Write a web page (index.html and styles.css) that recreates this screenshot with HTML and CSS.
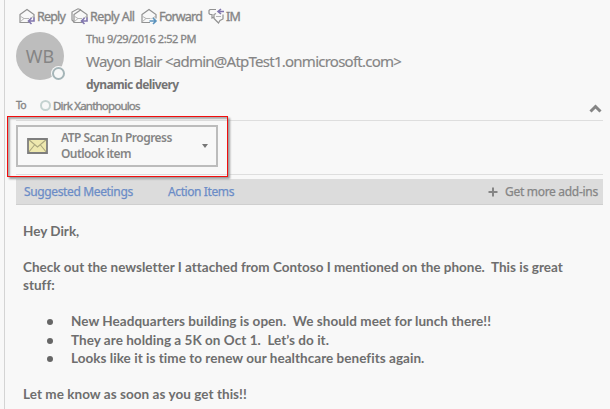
FILE: index.html
```html
<!DOCTYPE html>
<html lang="en">
<head>
<meta charset="utf-8">
<title>dynamic delivery</title>
<link rel="stylesheet" href="styles.css">
</head>
<body>
<main class="pane">
  <nav class="actions">
    <a class="action reply"><svg width="17" height="17" viewBox="0 0 17 17"><path class="env" d="M1 6.500 8 1.500l7 5v8H1z"/><path class="env faint" d="M1 8l4 2.500h6L15 8M1 14l4-3.500"/><path class="halo" d="M16 12.500H10"/><path class="arrow" d="M15 9.500v3.500H9.500m3-3-3 3 3 3"/></svg><span>Reply</span></a>
    <a class="action reply-all"><svg width="18" height="17" viewBox="0 0 18 17"><path class="env" d="M3 14 1 12V4L7 .8l3 1"/><path class="env" d="M3 6.500l6.500-4.500L16 6.500v8H3z"/><path class="env faint" d="M3 8l4 2.500h5L16 8M3 14l4-3.500"/><path class="halo" d="M17 12.500h-6"/><path class="arrow" d="M16 9.500v3.500h-5.500m3-3-3 3 3 3"/></svg><span>Reply All</span></a>
    <a class="action forward"><svg width="17" height="17" viewBox="0 0 17 17"><path class="env" d="M1 6.500 8 1.500l7 5v8H1z"/><path class="env faint" d="M1 8l4 2.500h6L15 8M1 14l4-3.500"/><path class="halo" d="M9 13h7"/><path class="arrow blue" d="M8.500 13H15m-3-3 3 3-3 3"/></svg><span>Forward</span></a>
    <a class="action im"><svg width="17" height="17" viewBox="0 0 17 17"><path class="env" d="M8 1.500H2L1 2.500v3l1 1h2v3.500l2-1"/><path class="env" d="M8 5.500 6 6.500v4l2 2 2.500 2.500 1.500-2.500 3-1.500V6.500"/><path class="env faint" d="M8 8.500h5"/><path class="arrow" d="M16 3.500h-6m3-2.500-3 2.500 3 2.500"/></svg><span>IM</span></a>
  </nav>

  <header class="sender">
    <div class="avatar">WB<i class="presence"></i></div>
    <div class="meta">
      <div class="date">Thu 9/29/2016 2:52 PM</div>
      <div class="from">Wayon Blair &lt;admin@AtpTest1.onmicrosoft.com&gt;</div>
      <div class="subject">dynamic delivery</div>
    </div>
  </header>

  <div class="recipients">
    <span class="to">To</span><i class="dot"></i><span class="name">Dirk Xanthopoulos</span>
    <svg class="chevron" width="13" height="9" viewBox="0 0 13 9"><path d="M1.500 7.500l5-5 5 5"/></svg>
  </div>

  <section class="attachments">
    <div class="card">
      <svg class="mail" width="21" height="16" viewBox="0 0 21 16"><path class="paper" d="M1 1h19v14H1z"/><path class="fold" d="M1 1l9.500 8L20 1M1 15l6.500-8M20 15l-6.500-8"/><path class="edge" d="M1 1h19v14H1z"/></svg>
      <div class="label"><div class="title">ATP Scan In Progress</div><div class="kind">Outlook item</div></div>
      <i class="caret"></i>
    </div>
    <div class="highlight"></div>
  </section>

  <div class="addins">
    <span class="suggested">Suggested Meetings</span>
    <span class="items">Action Items</span>
    <span class="more"><svg width="10" height="10" viewBox="0 0 10 10"><path d="M5 .5v9M.5 5h9"/></svg><span class="more-text">Get more add-ins</span></span>
  </div>

  <article class="message">
    <p>Hey Dirk,</p>
    <p class="gap">Check out the newsletter I attached from Contoso I mentioned on the phone.&nbsp; This is great<br>stuff:</p>
    <ul>
      <li>New Headquarters building is open.&nbsp; We should meet for lunch there!!</li>
      <li>They are holding a 5K on Oct 1.&nbsp; Let’s do it.</li>
      <li>Looks like it is time to renew our healthcare benefits again.</li>
    </ul>
    <p class="closing">Let me know as soon as you get this!!</p>
  </article>
</main>
</body>
</html>
```
FILE: styles.css
```css
* { box-sizing: border-box; }
html, body { height: 100%; }
body { margin: 0; overflow: hidden; background: #f8f8f8; color: #858585; font-family: "Noto Sans", "Open Sans", sans-serif; white-space: nowrap; font-variant-ligatures: none; }
svg { display: block; flex: none; fill: none; }
p, ul { margin: 0; padding: 0; list-style: none; }

.pane { height: 409px; margin-left: 4px; padding: 6px 7px 0 11px; border-left: 1px solid #d4d4d4; }

.actions { display: flex; height: 22px; padding-left: 3px; }
.action { display: flex; align-items: center; height: 20px; font-size: 12.500px; letter-spacing: -.8px; -webkit-text-stroke: .35px currentColor; }
.action svg { margin-right: 1px; }
.reply { width: 52px; }
.reply-all { width: 70px; }
.reply-all span { letter-spacing: -.6px; }
.forward { width: 67px; }
.env { stroke: #929292; stroke-width: 1.2; }
.faint { stroke: #b5b5b5; stroke-width: 1; }
.halo { stroke: #f8f8f8; stroke-width: 5; }
.arrow { stroke: #8176ae; stroke-width: 1.6; }
.arrow.blue { stroke: #5b93bd; }

.sender { display: flex; height: 69px; }
.avatar { position: relative; width: 48px; height: 48px; margin-top: 4px; border-radius: 50%; background: #bdbdbd; color: #858585; font-size: 18px; line-height: 48px; text-align: center; }
.presence { position: absolute; left: 36px; top: 35px; width: 13px; height: 13px; border: 2px solid #a5b5b8; border-radius: 50%; background: #f8f8f8; box-shadow: 0 0 0 1px #f8f8f8; }
.meta { margin-left: 22px; }
.date { height: 22px; font-size: 11px; line-height: 22px; letter-spacing: -.42px; -webkit-text-stroke: .3px currentColor; }
.from { height: 24px; font-size: 15px; line-height: 22px; letter-spacing: -.75px; -webkit-text-stroke: .15px currentColor; }
.subject { height: 22px; color: #747474; font-size: 12px; font-weight: 700; line-height: 22px; letter-spacing: -.6px; }

.recipients { display: flex; align-items: center; height: 24px; border-bottom: 1px solid #dedede; padding-bottom: 7px; font-size: 11.500px; letter-spacing: -.8px; -webkit-text-stroke: .35px currentColor; }
.to { width: 24px; font-size: 10.500px; }
.dot { width: 11px; height: 11px; margin-right: 2px; border: 2px solid #c4d2d0; border-radius: 50%; }
.chevron { margin-left: auto; margin-right: 1px; transform: translateY(3px); stroke: #858585; stroke-width: 3; }

.attachments { position: relative; height: 54px; padding-top: 4px; border-bottom: 1px solid #dedede; }
.card { display: flex; align-items: center; width: 202px; height: 42px; padding: 0 10px 0 9px; border: 2px solid #bcbcbc; }
.paper { fill: #eee8ae; }
.fold { stroke: #aaa67d; stroke-width: 1.1; }
.edge { stroke: #7e7e7e; stroke-width: 1.800; }
.label { margin-left: 13px; font-size: 12px; font-weight: 600; line-height: 16px; letter-spacing: -.52px; }
.kind { letter-spacing: -.6px; }
.caret { margin-left: auto; margin-right: -2px; width: 6px; height: 4px; background: #777; clip-path: polygon(0 0, 100% 0, 50% 100%); }
.highlight { position: absolute; left: -9px; top: -5px; width: 221px; height: 61px; border: 1px solid #f20d0d; box-shadow: 2px 2px 2px #999, inset 2px 2px 2px #aaa; }

.addins { display: flex; align-items: center; height: 26px; margin-top: 4px; padding: 0 5px 0 8px; background: #dcdcdc; border-bottom: 1px solid #cfcfcf; color: #6b8cc7; font-size: 12px; letter-spacing: -.36px; -webkit-text-stroke: .25px currentColor; }
.suggested { width: 144px; }
.items { letter-spacing: -.4px; }
.more { display: flex; align-items: center; margin-left: auto; color: #858585; }
.more svg { margin-right: 7px; stroke: #858585; stroke-width: 2; }
.more-text { width: 93px; letter-spacing: -.3px; }

.message { padding: 17px 0 0 7px; color: #6e6e6e; font-family: Lato, "Open Sans", sans-serif; font-size: 13.500px; font-weight: 700; line-height: 18px; }
.gap { margin-top: 18px; }
.message ul { margin: 18px 0 17px; padding-left: 48px; }
.message li { position: relative; height: 18.500px; line-height: 18.500px; letter-spacing: .04px; }
.closing { letter-spacing: .05px; }
.message li::before { content: ""; position: absolute; left: -24px; top: 7px; width: 6px; height: 6px; border-radius: 50%; background: #666; }
```
